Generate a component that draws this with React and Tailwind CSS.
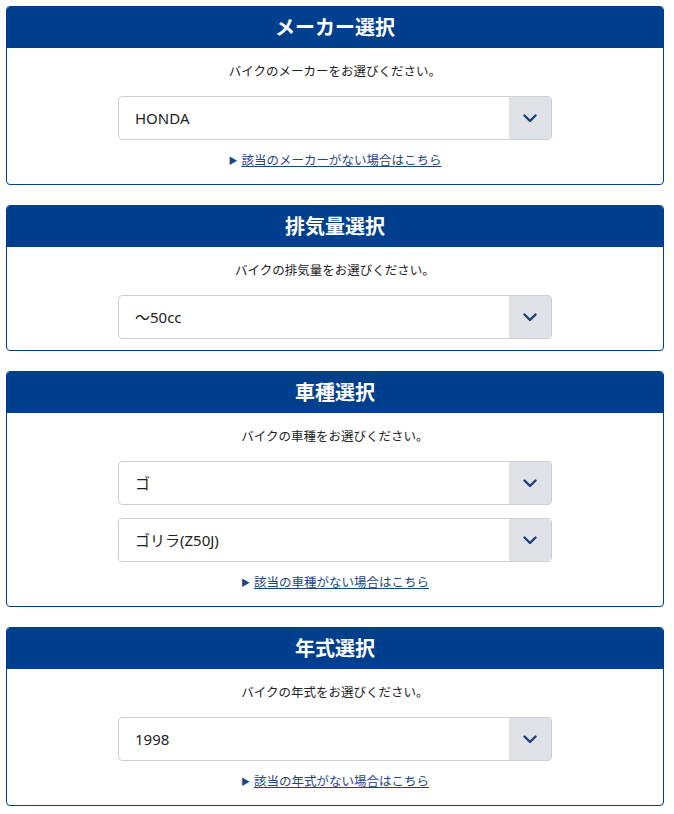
const sections = [
  {
    title: "メーカー選択",
    lead: "バイクのメーカーをお選びください。",
    selects: ["HONDA"],
    link: "該当のメーカーがない場合はこちら",
  },
  {
    title: "排気量選択",
    lead: "バイクの排気量をお選びください。",
    selects: ["～50cc"],
  },
  {
    title: "車種選択",
    lead: "バイクの車種をお選びください。",
    selects: ["ゴ", "ゴリラ(Z50J)"],
    link: "該当の車種がない場合はこちら",
  },
  {
    title: "年式選択",
    lead: "バイクの年式をお選びください。",
    selects: ["1998"],
    link: "該当の年式がない場合はこちら",
  },
];

const Chevron = () => (
  <svg width="14" height="9" viewBox="0 0 14 9" fill="none">
    <path
      d="M1.5 1.5 L7 7 L12.5 1.5"
      stroke="#1d3f7a"
      strokeWidth="2.4"
      strokeLinecap="round"
      strokeLinejoin="round"
    />
  </svg>
);

const SelectBox = ({ value }) => (
  <div className="flex h-[44px] w-[434px] mx-auto border border-[#cfcfcf] rounded-[4px] overflow-hidden bg-white">
    <div className="flex-1 flex items-center pl-[16px] text-[15px] text-[#222]">
      {value}
    </div>
    <div className="w-[42px] flex items-center justify-center bg-[#dfe3e8]">
      <Chevron />
    </div>
  </div>
);

const Section = ({ title, lead, selects, link }) => (
  <div className="border border-[#003f8e] rounded-[4px] overflow-hidden bg-white">
    <div className="h-[41px] bg-[#003f8e] flex items-center justify-center text-white text-[20px] font-bold pt-[1px]">
      {title}
    </div>
    <div className={`pt-[15px] ${link ? "pb-[13px]" : "pb-[11px]"}`}>
      <p className="text-center text-[12.5px] leading-[18px] text-[#222] mb-[15px]">
        {lead}
      </p>
      <div className="flex flex-col gap-[13px]">
        {selects.map((s) => (
          <SelectBox key={s} value={s} />
        ))}
      </div>
      {link && (
        <div className="mt-[11px] flex items-center justify-center gap-[4px] text-[12.5px] leading-[20px]">
          <span className="text-[#1b4686] text-[9px]">▶</span>
          <a href="#" className="text-[#1b4686] underline">
            {link}
          </a>
        </div>
      )}
    </div>
  </div>
);

export default function App() {
  return (
    <div
      className="bg-white min-h-[814px] pt-[6px] pl-[6px] pr-[10px] flex flex-col gap-[20px]"
      style={{ fontFamily: '"Noto Sans", "Noto Sans CJK JP", sans-serif' }}
    >
      {sections.map((sec) => (
        <Section key={sec.title} {...sec} />
      ))}
    </div>
  );
}
